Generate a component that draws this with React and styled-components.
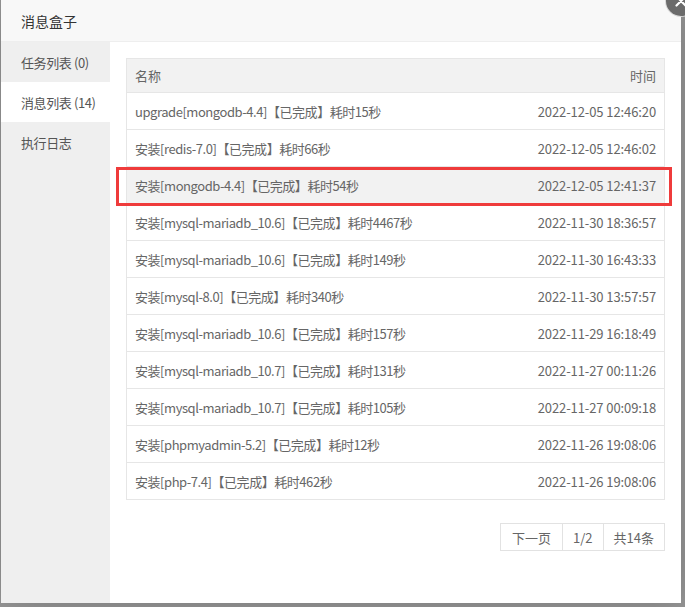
import React from 'react';
import styled, { createGlobalStyle } from 'styled-components';

const GlobalStyle = createGlobalStyle`
  html, body {
    margin: 0;
    padding: 0;
  }
  body {
    font-family: "Noto Sans CJK SC", "Noto Sans", sans-serif;
    font-size: 13px;
    color: #666;
  }
`;

const messages = [
  { name: 'upgrade[mongodb-4.4]【已完成】耗时15秒', time: '2022-12-05 12:46:20' },
  { name: '安装[redis-7.0]【已完成】耗时66秒', time: '2022-12-05 12:46:02' },
  { name: '安装[mongodb-4.4]【已完成】耗时54秒', time: '2022-12-05 12:41:37', active: true },
  { name: '安装[mysql-mariadb_10.6]【已完成】耗时4467秒', time: '2022-11-30 18:36:57' },
  { name: '安装[mysql-mariadb_10.6]【已完成】耗时149秒', time: '2022-11-30 16:43:33' },
  { name: '安装[mysql-8.0]【已完成】耗时340秒', time: '2022-11-30 13:57:57' },
  { name: '安装[mysql-mariadb_10.6]【已完成】耗时157秒', time: '2022-11-29 16:18:49' },
  { name: '安装[mysql-mariadb_10.7]【已完成】耗时131秒', time: '2022-11-27 00:11:26' },
  { name: '安装[mysql-mariadb_10.7]【已完成】耗时105秒', time: '2022-11-27 00:09:18' },
  { name: '安装[phpmyadmin-5.2]【已完成】耗时12秒', time: '2022-11-26 19:08:06' },
  { name: '安装[php-7.4]【已完成】耗时462秒', time: '2022-11-26 19:08:06' },
];

const tabs = [
  { label: '任务列表 (0)' },
  { label: '消息列表 (14)', active: true },
  { label: '执行日志' },
];

const Page = styled.div`
  width: 685px;
  height: 607px;
  background: #979797;
  overflow: hidden;
  padding-left: 1px;
  box-sizing: border-box;
`;

const Dialog = styled.div`
  position: relative;
  width: 680px;
  height: 603px;
  background: #fff;
  display: flex;
  flex-direction: column;
  box-shadow: 1px 1px 40px rgba(0, 0, 0, 0.2);
`;

const Header = styled.div`
  height: 42px;
  flex: none;
  box-sizing: border-box;
  padding-left: 20px;
  display: flex;
  align-items: center;
  background: #f8f8f8;
  border-bottom: 1px solid #eee;
  color: #333;
  font-size: 14px;
`;

const Close = styled.div`
  position: absolute;
  top: -14px;
  right: -15px;
  width: 30px;
  height: 30px;
  border-radius: 50%;
  background: #6b6b6b;
  box-shadow: 0 0 0 1px #d8d8d8;
  display: flex;
  align-items: center;
  justify-content: center;
`;

const Body = styled.div`
  flex: 1;
  display: flex;
  min-height: 0;
`;

const Sidebar = styled.div`
  width: 109px;
  flex: none;
  background: #efefef;
`;

const Tab = styled.div`
  height: 40px;
  padding-left: 20px;
  display: flex;
  align-items: center;
  color: #555;
  letter-spacing: -0.4px;
  background: ${(p) => (p.$active ? '#fff' : 'transparent')};
`;

const Content = styled.div`
  position: relative;
  flex: 1;
  padding: 16px 16px 0;
  display: flex;
  flex-direction: column;
`;

const Table = styled.div`
  border: 1px solid #e6e6e6;
`;

const Row = styled.div`
  display: flex;
  justify-content: space-between;
  align-items: center;
  height: ${(p) => (p.$head ? '33px' : '36px')};
  padding: 0 8px 0 8px;
  background: ${(p) => (p.$head || p.$active ? '#f2f2f2' : '#fff')};
  border-top: ${(p) => (p.$head ? 'none' : '1px solid #e6e6e6')};
  color: #666;
  white-space: nowrap;
`;

const Name = styled.span`
  letter-spacing: -0.45px;
`;

const Time = styled.span`
  letter-spacing: -0.1px;
`;

const Highlight = styled.div`
  position: absolute;
  left: 6px;
  top: 125px;
  width: 556px;
  height: 39px;
  box-sizing: border-box;
  border: 3px solid #ef3b3b;
  pointer-events: none;
`;

const Pager = styled.div`
  display: flex;
  justify-content: flex-end;
  margin-top: 23px;
`;

const PageCell = styled.div`
  height: 26px;
  padding: 0 ${(p) => p.$pad || 11}px;
  display: flex;
  align-items: center;
  border: 1px solid #e2e2e2;
  margin-left: -1px;
  color: #666;
`;

const CloseIcon = () => (
  <svg width="12" height="12" viewBox="0 0 12 12">
    <path d="M1.5 1.5 L10.5 10.5 M10.5 1.5 L1.5 10.5" stroke="#fff" strokeWidth="2.2" strokeLinecap="round" />
  </svg>
);

export default function App() {
  return (
    <>
      <GlobalStyle />
      <Page>
        <Dialog>
          <Header>消息盒子</Header>
          <Close>
            <CloseIcon />
          </Close>
          <Body>
            <Sidebar>
              {tabs.map((t) => (
                <Tab key={t.label} $active={t.active}>
                  {t.label}
                </Tab>
              ))}
            </Sidebar>
            <Content>
              <Table>
                <Row $head>
                  <span>名称</span>
                  <span>时间</span>
                </Row>
                {messages.map((m, i) => (
                  <Row key={i} $active={m.active}>
                    <Name>{m.name}</Name>
                    <Time>{m.time}</Time>
                  </Row>
                ))}
              </Table>
              <Highlight />
              <Pager>
                <PageCell $pad={11}>下一页</PageCell>
                <PageCell $pad={10}>1/2</PageCell>
                <PageCell $pad={10}>共14条</PageCell>
              </Pager>
            </Content>
          </Body>
        </Dialog>
      </Page>
    </>
  );
}
